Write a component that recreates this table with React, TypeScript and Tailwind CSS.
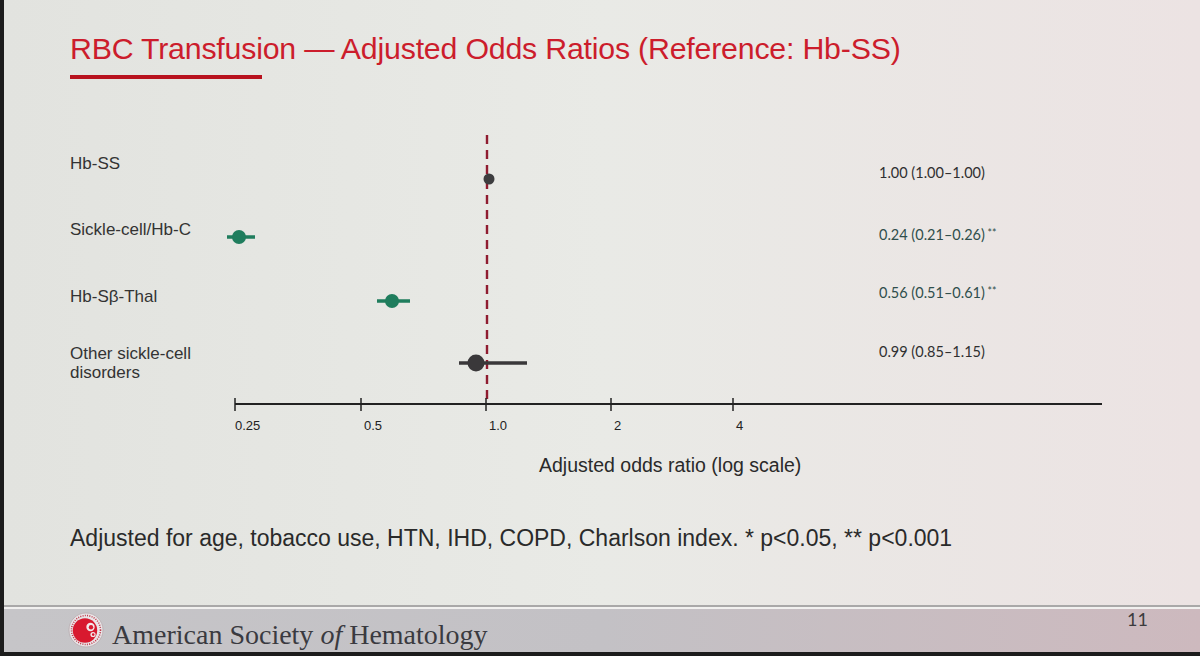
import React from "react"

const sans = { fontFamily: '"Liberation Sans", Arial, sans-serif' }

// pixel positions read off the slide (chart svg starts at x=200, y=130)
const OX = 200
const OY = 130

const points = [
  { cx: 489, cy: 179, r: 5.5, lo: 489, hi: 489, fill: "#3d3d3f" },
  { cx: 239, cy: 237, r: 7, lo: 227, hi: 255, fill: "#1f7d5d" },
  { cx: 392, cy: 301, r: 7, lo: 377, hi: 410, fill: "#1f7d5d" },
  { cx: 476, cy: 363, r: 8.5, lo: 459, hi: 527, fill: "#3a383a" },
]

const values = [
  { y: 178, text: "1.00 (1.00–1.00)", stars: "", color: "#2f2f30" },
  { y: 240, text: "0.24 (0.21–0.26)", stars: " **", color: "#2f4e4c" },
  { y: 298, text: "0.56 (0.51–0.61)", stars: " **", color: "#2f4e4c" },
  { y: 357, text: "0.99 (0.85–1.15)", stars: "", color: "#2f2f30" },
]

const ticks = [
  { x: 235, label: "0.25" },
  { x: 361, label: "0.5" },
  { x: 486, label: "1.0" },
  { x: 611, label: "2" },
  { x: 733, label: "4" },
]

function ForestPlot() {
  return (
    <svg width={920} height={310} viewBox="0 0 920 310" className="shrink-0">
      {/* reference line at OR = 1 */}
      <line
        x1={487 - OX}
        x2={487 - OX}
        y1={135 - OY}
        y2={404 - OY}
        stroke="#8f1c30"
        strokeWidth={2.4}
        strokeDasharray="9 6"
      />
      {/* axis */}
      <line x1={235 - OX} x2={1102 - OX} y1={404 - OY} y2={404 - OY} stroke="#222" strokeWidth={2} />
      {ticks.map((t) => (
        <g key={t.label}>
          <line x1={t.x - OX} x2={t.x - OX} y1={398 - OY} y2={411 - OY} stroke="#222" strokeWidth={1.5} />
          <text
            x={t.x - OX + (t.label === "0.25" ? 0 : 3)}
            y={430 - OY}
            fontSize={13}
            fill="#222"
            fontFamily="'Liberation Sans', Arial, sans-serif"
          >
            {t.label}
          </text>
        </g>
      ))}
      {points.map((p, i) => (
        <g key={i}>
          {p.hi > p.lo && (
            <line
              x1={p.lo - OX}
              x2={p.hi - OX}
              y1={p.cy - OY}
              y2={p.cy - OY}
              stroke={p.fill}
              strokeWidth={3.5}
            />
          )}
          <circle cx={p.cx - OX} cy={p.cy - OY} r={p.r} fill={p.fill} />
        </g>
      ))}
      {values.map((v) => (
        <text
          key={v.text}
          x={879 - OX}
          y={v.y - OY}
          fontSize={14.5}
          fill={v.color}
          fontFamily="Lato, 'Liberation Sans', sans-serif"
        >
          {v.text}
          <tspan fontSize={10.5} dy={-3}>
            {v.stars}
          </tspan>
        </text>
      ))}
    </svg>
  )
}

function AshLogo() {
  return (
    <svg width={36} height={36} viewBox="0 0 36 36" className="shrink-0">
      <circle cx={18} cy={18} r={17} fill="#e9e6e8" stroke="#b7a9ad" strokeWidth={0.8} />
      <circle cx={18} cy={18} r={14.5} fill="none" stroke="#c0394a" strokeWidth={1.6} strokeDasharray="1 1.3" />
      <circle cx={17} cy={18.5} r={12.2} fill="#d8192f" />
      <circle cx={22.5} cy={15} r={4.2} fill="#f2e8ea" />
      <circle cx={23} cy={15.2} r={2.2} fill="#d8192f" />
      <circle cx={25} cy={22.5} r={2.6} fill="#f2e8ea" />
      <circle cx={25.2} cy={22.6} r={1.3} fill="#d8192f" />
    </svg>
  )
}

export default function App() {
  return (
    <div
      className="w-[1200px] h-[656px] overflow-hidden flex flex-col border-l-[4px] border-[#1c1c1c] bg-gradient-to-r from-[#e2e3df] via-[#e9eae6] to-[#ece3e3] text-[#2e2e2e]"
      style={sans}
    >
      {/* title */}
      <div className="pt-[31px] pl-[66px] h-[130px] shrink-0">
        <h1 className="text-[30.3px] leading-[36px] text-[#cc1d2c] tracking-[-0.2px]">
          RBC Transfusion — Adjusted Odds Ratios (Reference: Hb-SS)
        </h1>
        <div className="mt-[8px] w-[192px] h-[4px] bg-[#b8121e]" />
      </div>

      {/* chart */}
      <div className="flex h-[310px] shrink-0">
        <div className="w-[130px] ml-[66px] shrink-0 text-[17px] text-[#333]">
          <div className="pt-[24px] leading-[20px]">Hb-SS</div>
          <div className="mt-[46px] leading-[20px]">Sickle-cell/Hb-C</div>
          <div className="mt-[47px] leading-[20px]">Hb-Sβ-Thal</div>
          <div className="mt-[37px] leading-[19px]">
            Other sickle-cell
            <br />
            disorders
          </div>
        </div>
        <ForestPlot />
      </div>

      <div className="pl-[535px] pt-[14px] text-[19.5px] leading-[22px] text-[#2a2a2a]">
        Adjusted odds ratio (log scale)
      </div>

      <div className="pl-[66px] pt-[49px] text-[23px] leading-[26px] text-[#2a2a2a]">
        Adjusted for age, tobacco use, HTN, IHD, COPD, Charlson index. * p&lt;0.05, ** p&lt;0.001
      </div>

      {/* footer */}
      <div className="mt-auto">
        <div className="h-[2px] bg-[#a9a8a8]" />
        <div className="h-[2px] bg-[#f1f0ef]" />
        <div className="h-[43px] flex items-start bg-gradient-to-r from-[#c6c5c8] via-[#c3c1c5] to-[#cdb9be] pl-[64px] pr-[52px]">
          <div className="pt-[3px] shrink-0">
            <AshLogo />
          </div>
          <span
            className="ml-[8px] pt-[11px] text-[28px] leading-[30px] text-[#3a3a40]"
            style={{ fontFamily: '"Liberation Serif", "Times New Roman", serif' }}
          >
            American Society <i>of</i> Hematology
          </span>
          <span
            className="ml-auto text-[18px] leading-[20px] text-[#3b3b3d]"
            style={{ fontFamily: 'Lato, "Liberation Sans", sans-serif' }}
          >
            11
          </span>
        </div>
        <div className="h-[4px] bg-[#1c1c1c]" />
      </div>
    </div>
  )
}
